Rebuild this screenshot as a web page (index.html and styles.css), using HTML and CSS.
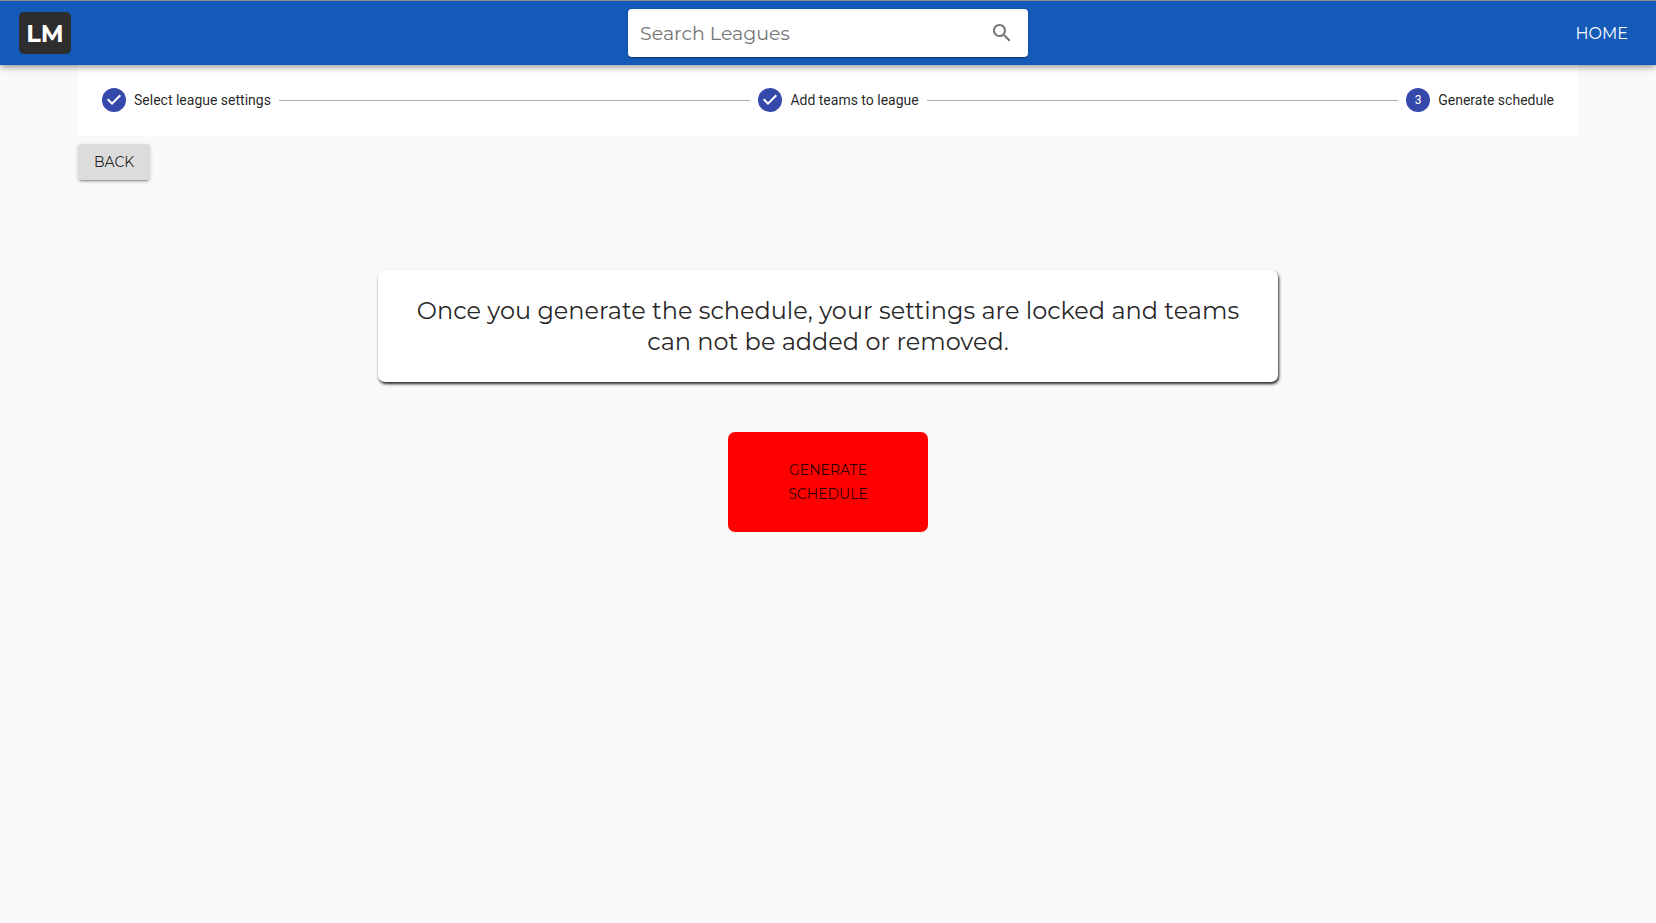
FILE: index.html
```html
<!DOCTYPE html>
<html lang="en">
<head>
<meta charset="utf-8">
<meta name="viewport" content="width=device-width, initial-scale=1">
<title>Generate schedule</title>
<link rel="stylesheet" href="styles.css">
</head>
<body>
<header class="topbar">
  <div class="topbar-side"><a class="logo" href="#" aria-label="LM">LM</a></div>
  <form class="search" role="search">
    <input class="search-input" type="search" placeholder="Search Leagues" aria-label="Search Leagues">
    <button class="search-button" type="button" aria-label="Search">
      <svg viewBox="0 0 24 24" width="24" height="24" fill="currentColor" aria-hidden="true"><path d="M15.5 14h-.79l-.28-.27C15.41 12.59 16 11.11 16 9.5 16 5.91 13.09 3 9.5 3S3 5.91 3 9.5 5.91 16 9.5 16c1.61 0 3.09-.59 4.23-1.57l.27.28v.79l5 4.99L20.49 19l-4.99-5zm-6 0C7.01 14 5 11.99 5 9.5S7.01 5 9.5 5 14 7.01 14 9.5 11.99 14 9.5 14z"/></svg>
    </button>
  </form>
  <nav class="topbar-side topbar-nav"><a class="nav-link" href="#">HOME</a></nav>
</header>
<main class="page">
  <ol class="stepper">
    <li class="step">
      <svg class="step-check" viewBox="0 0 24 24" width="24" height="24" fill="currentColor" aria-hidden="true"><path d="M12 0a12 12 0 1 0 0 24a12 12 0 0 0 0-24zm-2 17l-5-5 1.4-1.4 3.6 3.6 7.6-7.6L19 8l-9 9z"/></svg>
      <span>Select league settings</span>
    </li>
    <li class="step-line" aria-hidden="true"></li>
    <li class="step">
      <svg class="step-check" viewBox="0 0 24 24" width="24" height="24" fill="currentColor" aria-hidden="true"><path d="M12 0a12 12 0 1 0 0 24a12 12 0 0 0 0-24zm-2 17l-5-5 1.4-1.4 3.6 3.6 7.6-7.6L19 8l-9 9z"/></svg>
      <span>Add teams to league</span>
    </li>
    <li class="step-line" aria-hidden="true"></li>
    <li class="step">
      <span class="step-number">3</span>
      <span>Generate schedule</span>
    </li>
  </ol>
  <button class="back-button" type="button">BACK</button>
  <section class="content">
    <p class="notice">Once you generate the schedule, your settings are locked and teams can not be added or removed.</p>
    <button class="generate-button" type="button">GENERATE SCHEDULE</button>
  </section>
</main>
</body>
</html>
```

FILE: styles.css
```css
* {
  box-sizing: border-box;
}

body {
  margin: 0;
  background: #f9f9f9;
  color: rgba(0, 0, 0, 0.87);
  font-family: Montserrat, Inter, sans-serif;
}

.topbar {
  position: relative;
  display: flex;
  align-items: center;
  height: 65px;
  border-top: 1px solid #8f8f8f;
  background: #145ab8;
  box-shadow: 0 2px 4px -1px rgba(0, 0, 0, 0.2), 0 4px 5px rgba(0, 0, 0, 0.14), 0 1px 10px rgba(0, 0, 0, 0.12);
}

.topbar-side {
  display: flex;
  flex: 1 1 0;
  align-items: center;
}

.topbar-nav {
  justify-content: flex-end;
}

.logo {
  display: flex;
  align-items: center;
  justify-content: center;
  width: 52px;
  height: 42px;
  margin-left: 19px;
  border-radius: 5px;
  background: #2d2d2d;
  color: #fff;
  font-size: 24px;
  font-weight: 700;
  text-decoration: none;
}

.nav-link {
  margin-right: 28px;
  color: #fff;
  font-size: 16px;
  font-weight: 400;
  text-decoration: none;
}

.search {
  display: flex;
  align-items: center;
  width: 400px;
  height: 48px;
  padding: 0 14px 0 12px;
  border-radius: 4px;
  background: #fff;
  box-shadow: 0 2px 1px -1px rgba(0, 0, 0, 0.2), 0 1px 1px rgba(0, 0, 0, 0.14), 0 1px 3px rgba(0, 0, 0, 0.12);
}

.search-input {
  flex: 1;
  min-width: 0;
  padding: 0;
  border: 0;
  outline: 0;
  background: transparent;
  color: inherit;
  font: 400 19px Montserrat, Inter, sans-serif;
}

.search-input::placeholder {
  color: #757575;
}

.search-button {
  display: flex;
  padding: 0;
  border: 0;
  background: transparent;
  color: #757575;
}

.page {
  max-width: 1500px;
  margin: 0 auto;
}

.stepper {
  display: flex;
  align-items: center;
  gap: 8px;
  margin: 0 0 8px;
  padding: 23px 24px 24px;
  background: #fff;
  font: 400 14px/24px Roboto, sans-serif;
  list-style: none;
}

.step {
  display: flex;
  align-items: center;
  gap: 8px;
}

.step-check {
  display: block;
  color: #3549ab;
}

.step-number {
  width: 24px;
  border-radius: 50%;
  background: #3549ab;
  color: #fff;
  font-size: 12px;
  text-align: center;
}

.step-line {
  flex: 1;
  height: 1px;
  background: #b0b0b0;
}

.back-button {
  display: block;
  padding: 6px 16px;
  border: 0;
  border-radius: 4px;
  background: #dcdcdc;
  box-shadow: 0 3px 1px -2px rgba(0, 0, 0, 0.2), 0 2px 2px rgba(0, 0, 0, 0.14), 0 1px 5px rgba(0, 0, 0, 0.12);
  color: inherit;
  font: 400 14px/24px Montserrat, Inter, sans-serif;
}

.content {
  display: flex;
  flex-direction: column;
  align-items: center;
  gap: 50px;
  padding-top: 90px;
}

.notice {
  max-width: 900px;
  margin: 0;
  padding: 25px 32px;
  border-radius: 7px;
  background: #fff;
  box-shadow: 1px 2px 3px #222;
  font-size: 24px;
  font-weight: 400;
  line-height: 31px;
  text-align: center;
}

.generate-button {
  width: 200px;
  height: 100px;
  padding: 0 48px;
  border: 0;
  border-radius: 7px;
  background: #f00;
  color: rgba(0, 0, 0, 0.87);
  font: 400 14px/24px Montserrat, Inter, sans-serif;
}
```
